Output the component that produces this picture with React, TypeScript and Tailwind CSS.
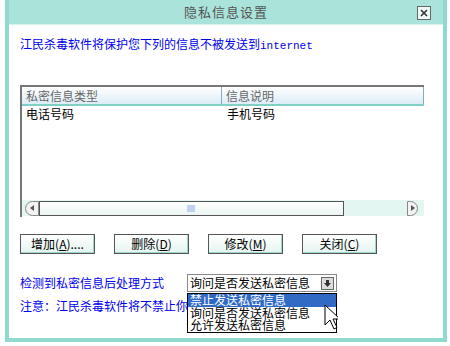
import React from "react";

const cjk = { fontFamily: '"Noto Sans CJK SC", "Liberation Sans", sans-serif' };

function Btn({ label, hot, tail }: { label: string; hot: string; tail?: string }) {
  return (
    <button
      type="button"
      className="w-[75px] h-[20px] border border-[#555] bg-gradient-to-b from-white to-[#e4f4f0] text-[12px] leading-[18px] text-black shadow-[inset_-1px_-1px_0_#9fd6cc]"
    >
      {label}(<span className="underline">{hot}</span>){tail}
    </button>
  );
}

export default function App() {
  return (
    <div className="w-[450px] h-[346px] bg-white pl-[5px] overflow-hidden" style={cjk}>
      <div className="relative w-[442px] h-[342px] flex flex-col border-l-4 border-r-4 border-b-4 border-[#8fd9cf] bg-white">
        {/* title bar */}
        <div className="h-[25px] flex items-center justify-center bg-[#a9e3da] border-b border-[#d8f3ee] relative">
          <span className="text-[13px] text-[#555] tracking-[1px]">隐私信息设置</span>
          <div className="absolute right-[12px] top-[6px] w-[14px] h-[14px] border border-[#666] bg-[#eef8f6] flex items-center justify-center">
            <svg width="8" height="8" viewBox="0 0 8 8">
              <path d="M1 1l6 6M7 1l-6 6" stroke="#333" strokeWidth="1.6" />
            </svg>
          </div>
        </div>

        <div className="flex flex-col pl-[11px]">
          <div className="pt-[11px] text-[12px] leading-[16px] text-[#0000f0]">
            江民杀毒软件将保护您下列的信息不被发送到
            <span style={{ fontFamily: '"Liberation Mono", monospace' }} className="text-[11px]">internet</span>
          </div>

          {/* list */}
          <div className="mt-[31px] w-[404px] h-[132px] flex flex-col border-t-2 border-l-2 border-[#777] bg-white">
            <div className="h-[19px] flex border-b-2 border-[#7fcfc4] bg-gradient-to-b from-white to-[#dcecf6] text-[12px] leading-[17px] text-[#666]">
              <div className="w-[200px] pl-[4px] border-r border-[#8ab]">私密信息类型</div>
              <div className="flex-1 pl-[4px] border-r border-[#8ab]">信息说明</div>
            </div>
            <div className="flex text-[12px] leading-[16px] text-black">
              <div className="w-[201px] pl-[4px]">电话号码</div>
              <div className="flex-1 pl-[4px]">手机号码</div>
            </div>
            <div className="flex-1" />
            {/* scrollbar */}
            <div className="h-[16px] mb-[1px] flex items-center bg-[#e4f6f1] pr-[6px]">
              <div className="w-[14px] h-[15px] ml-[3px] rounded-l-full border border-[#888] bg-[#f2f2f2] flex items-center justify-center">
                <span className="block w-0 h-0 border-y-[3px] border-y-transparent border-r-[4px] border-r-[#555]" />
              </div>
              <div className="w-[305px] h-[15px] border border-[#555] bg-gradient-to-b from-white to-[#eaf6f3] flex items-center justify-center">
                <svg width="9" height="7" viewBox="0 0 9 7">
                  <g stroke="#8aa8ee" strokeWidth="1">
                    <path d="M1 0v7M3 0v7M5 0v7M7 0v7" />
                  </g>
                </svg>
              </div>
              <div className="flex-1" />
              <div className="w-[11px] h-[15px] rounded-r-full border border-[#888] bg-[#f2f2f2] flex items-center justify-center">
                <span className="block w-0 h-0 border-y-[3px] border-y-transparent border-l-[4px] border-l-[#555]" />
              </div>
            </div>
          </div>

          {/* buttons */}
          <div className="mt-[17px] flex gap-[19px]">
            <Btn label="增加" hot="A" tail="...." />
            <Btn label="删除" hot="D" />
            <Btn label="修改" hot="M" />
            <Btn label="关闭" hot="C" />
          </div>

          <div className="mt-[20px] flex items-center">
            <span className="w-[167px] text-[12px] leading-[16px] text-[#0000f0]">检测到私密信息后处理方式</span>
            <div className="relative">
              <div className="w-[150px] h-[18px] border border-[#888] bg-white flex items-center text-[12px] leading-[16px] text-black">
                <span className="pl-[2px] flex-1">询问是否发送私密信息</span>
                <span className="w-[13px] h-[13px] mr-[2px] border border-[#666] bg-[#ddd] flex items-center justify-center">
                  <svg width="7" height="7" viewBox="0 0 7 7">
                    <path d="M2 0h3v3h2L3.5 7 0 3h2z" fill="#333" />
                  </svg>
                </span>
              </div>
              {/* open list */}
              <div className="absolute left-0 top-[19px] w-[150px] border border-black bg-white text-[12px] leading-[12.5px] text-black z-10">
                <div className="bg-[#316ac5] text-white pl-[2px]">禁止发送私密信息</div>
                <div className="pl-[2px]">询问是否发送私密信息</div>
                <div className="pl-[2px]">允许发送私密信息</div>
              </div>
              <svg className="absolute left-[137px] top-[30px] z-20" width="14" height="26" viewBox="0 0 14 26">
                <path d="M1 1v20l5-5 4 9 3-1.5-4-8.5h7z" fill="white" stroke="black" strokeWidth="1" />
              </svg>
            </div>
          </div>

          <div className="mt-[6px] text-[12px] leading-[16px] text-[#0000f0]">注意：江民杀毒软件将不禁止你</div>
        </div>
      </div>
    </div>
  );
}
